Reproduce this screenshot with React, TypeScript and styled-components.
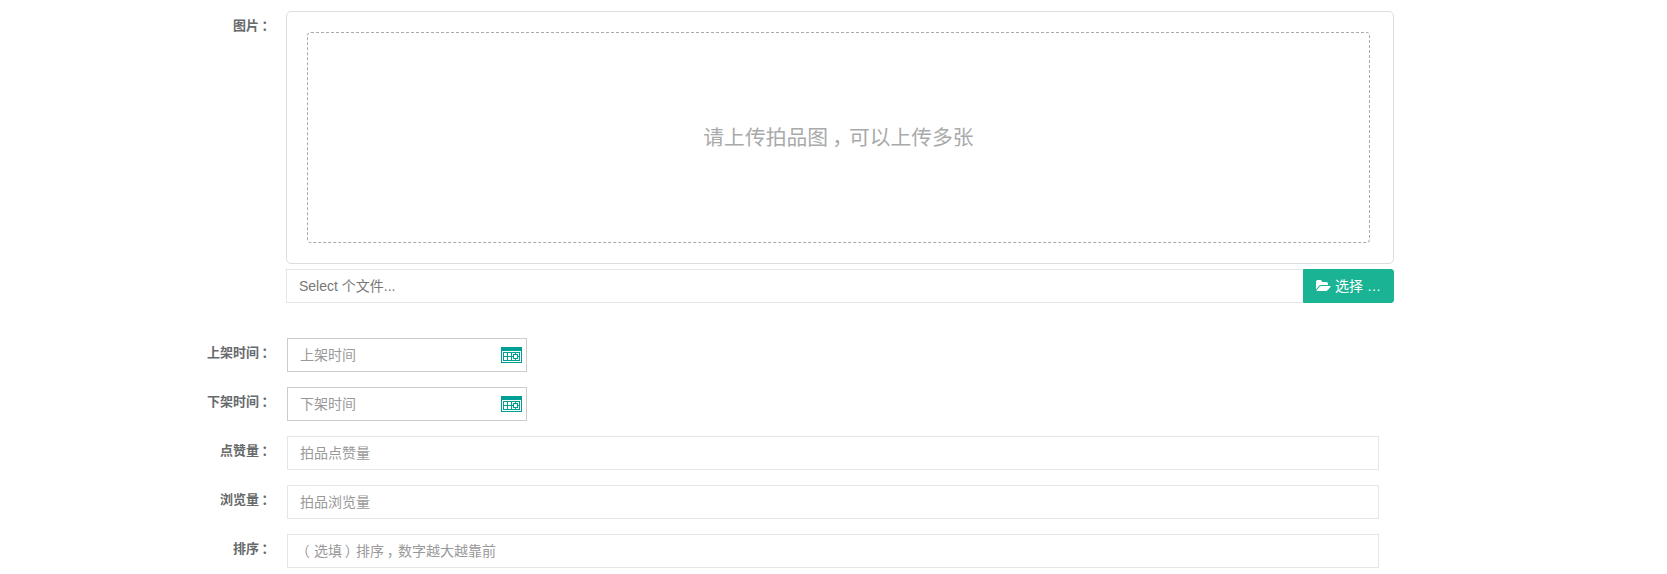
import React from 'react'
import styled, { createGlobalStyle, css } from 'styled-components'

interface FieldTypes {
    label: string,
    placeholder: string,
    date?: boolean,
}

const fields: FieldTypes[] = [
    { label: '上架时间', placeholder: '上架时间', date: true },
    { label: '下架时间', placeholder: '下架时间', date: true },
    { label: '点赞量', placeholder: '拍品点赞量' },
    { label: '浏览量', placeholder: '拍品浏览量' },
    { label: '排序', placeholder: '（选填）排序，数字越大越靠前' },
]

const withPunctuation = (text: string) =>
    text.split(/([，：（）])/).filter(Boolean).map((part, index) => (
        /[，：（）]/.test(part)
            ? <Punctuation key={index}>{part}</Punctuation>
            : <React.Fragment key={index}>{part}</React.Fragment>
    ))

const FolderOpenIcon = () => (
    <FolderSvg viewBox="0 0 1920 1792">
        <path
            fill="currentColor"
            d="M1879 952q0 31-31 66l-336 396q-43 51-120.500 86.500t-143.500 35.500h-1088q-34 0-60.500-13t-26.500-43q0-31 31-66l336-396q43-51 120.500-86.500t143.500-35.500h1088q34 0 60.500 13t26.500 43zm-343-344v160h-832q-94 0-197 47.500t-164 119.500l-337 396-5 6q0-4-.5-12.500t-.5-12.500v-960q0-92 66-158t158-66h320q92 0 158 66t66 158v32h544q92 0 158 66t66 158z"
        />
    </FolderSvg>
)

const CalendarIcon = () => (
    <CalendarSvg viewBox="0 0 21 16" shapeRendering="crispEdges">
        <path fill="#009f95" d="M0 0h21v16H0z" />
        <path fill="#fff" d="M1 4h19v11H1z" />
        <path fill="#009f95" d="M2 5h17v9H2z" />
        <path fill="#fff" d="M3 6h3v3H3zM7 6h3v3H7zM11 6h7v7h-7zM3 10h3v3H3zM7 10h3v3H7z" />
        <path fill="#009f95" d="M12 7h5v5h-5zM14 6h1v7h-1zM11 9h7v1h-7z" />
        <path fill="#fff" d="M13 8h3v3h-3z" />
    </CalendarSvg>
)

const App = () => {
    return (
        <>
            <GlobalStyle />
            <Form>
                <UploadRow>
                    <Label>{withPunctuation('图片：')}</Label>
                    <UploadContainer>
                        <Preview>
                            <DropZone><span>{withPunctuation('请上传拍品图，可以上传多张')}</span></DropZone>
                        </Preview>
                        <FileGroup>
                            <FileCaption>Select 个文件...</FileCaption>
                            <BrowseButton type="button">
                                <FolderOpenIcon />
                                选择 …
                            </BrowseButton>
                        </FileGroup>
                    </UploadContainer>
                </UploadRow>
                {fields.map((field) => (
                    <Row key={field.label}>
                        <Label>{withPunctuation(`${field.label}：`)}</Label>
                        <Field $date={field.date}>
                            <Placeholder>{withPunctuation(field.placeholder)}</Placeholder>
                            {field.date && <CalendarIcon />}
                        </Field>
                    </Row>
                ))}
            </Form>
        </>
    )
}

export default App

const GlobalStyle = createGlobalStyle`
    * {
        box-sizing: border-box;
    }
    body {
        margin: 0;
        background-color: #ffffff;
        color: #676a6c;
        font-family: "Liberation Sans", "Noto Sans CJK SC", sans-serif;
        font-size: 13px;
        overflow: hidden;
    }
`

const controlStyles = css`
    height: 34px;
    border: 1px solid #e5e6e7;
    background-color: #ffffff;
    font-size: 14px;
    line-height: 20px;
`

const Form = styled.form`
    display: flex;
    flex-direction: column;
    gap: 15px;
    padding-top: 11px;
`

const Row = styled.div`
    display: flex;
    align-items: flex-start;
    gap: 15px;
`

const UploadRow = styled(Row)`
    gap: 14px;
    margin-bottom: 20px;
`

const Label = styled.label`
    width: 272px;
    padding-top: 5px;
    font-weight: 700;
    line-height: 20px;
    text-align: right;
`

const Punctuation = styled.span`
    padding: 0 0.3em 0 0.2em;
    font-family: "Noto Sans CJK SC", sans-serif;
    font-feature-settings: "halt";
    line-height: 1;
`

const UploadContainer = styled.div`
    width: 1108px;
`

const Preview = styled.div`
    height: 253px;
    margin-bottom: 5px;
    padding: 20px 23px 20px 20px;
    border: 1px solid #dddddd;
    border-radius: 5px;
`

const DropZone = styled.div`
    display: flex;
    align-items: center;
    justify-content: center;
    height: 211px;
    padding-top: 1px;
    border: 1px dashed #aaaaaa;
    border-radius: 4px;
    color: #aaaaaa;
    font-size: 20.8px;
    line-height: 30px;
`

const FileGroup = styled.div`
    display: flex;
`

const FileCaption = styled.div`
    ${controlStyles}
    flex: 1;
    padding: 6px 12px;
    border-right: none;
    border-radius: 1px 0 0 1px;
    color: #777777;
`

const BrowseButton = styled.button`
    ${controlStyles}
    display: flex;
    align-items: center;
    gap: 4px;
    width: 91px;
    padding: 0 12px;
    border-color: #1ab394;
    border-radius: 0 3px 3px 0;
    background-color: #1ab394;
    color: #ffffff;
    font-family: inherit;
    white-space: nowrap;
`

const Field = styled.div<{ $date?: boolean }>`
    ${controlStyles}
    display: flex;
    align-items: center;
    justify-content: space-between;
    width: ${({ $date }) => ($date ? '240px' : '1092px')};
    padding: 0 4px 0 12px;
    border-color: ${({ $date }) => ($date ? '#cccccc' : '#e5e6e7')};
`

const Placeholder = styled.span`
    color: #999999;
`

const FolderSvg = styled.svg`
    width: 15px;
    height: 14px;
    flex: none;
`

const CalendarSvg = styled.svg`
    width: 21px;
    height: 16px;
    flex: none;
`
